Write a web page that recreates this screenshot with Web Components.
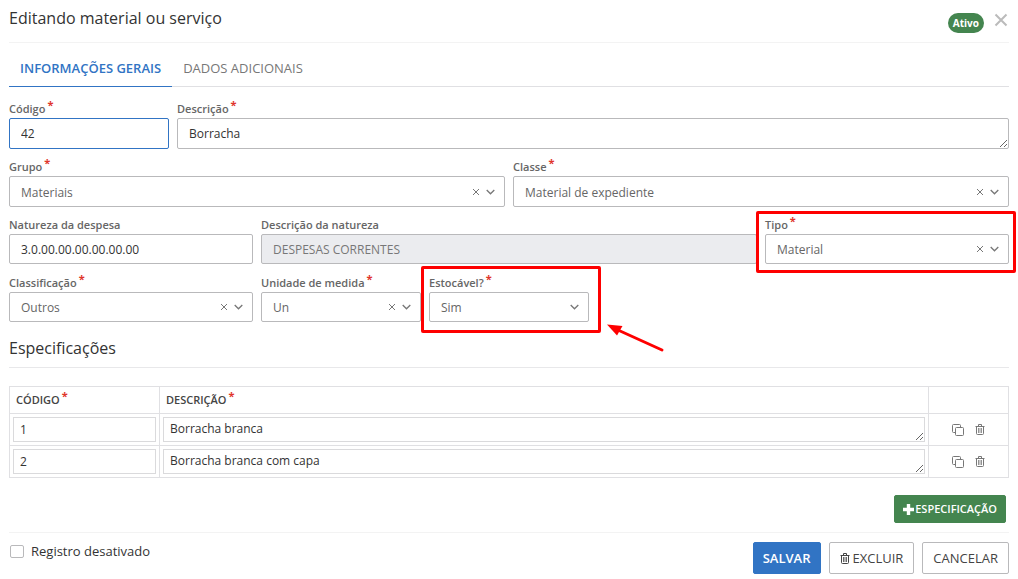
<!DOCTYPE html>
<html lang="pt-BR">
<head>
<meta charset="utf-8">
<meta name="viewport" content="width=device-width, initial-scale=1">
<title>Editando material ou serviço</title>
<style>
  body {
    margin: 0;
    background: #fff;
    color: #333;
    font-family: "Open Sans", "Noto Sans", sans-serif;
    font-size: 12px;
    --blue: #3174c4;
    --green: #44854f;
    --red: #e0352b;
    --line: #e0e0e3;
    --border: #b9b9bb;
  }
</style>
</head>
<body>
<material-dialog></material-dialog>

<script>
const ICONS = {
  close: '<svg width="14" height="14" viewBox="0 0 14 14"><path d="M1.5 1.5l11 11M12.5 1.5l-11 11" stroke="currentColor" stroke-width="2" fill="none"/></svg>',
  clear: '<svg width="8" height="8" viewBox="0 0 8 8"><path d="M1 1l6 6M7 1L1 7" stroke="currentColor" stroke-width="1" fill="none"/></svg>',
  chevron: '<svg width="9" height="6" viewBox="0 0 9 6"><path d="M.7 1L4.500 4.800 8.300 1" stroke="currentColor" stroke-width="1.300" fill="none"/></svg>',
  copy: '<svg width="12" height="12" viewBox="0 0 12 12"><g fill="none" stroke="currentColor"><path d="M3 8.500H1.500Q.5 8.500.5 7.500V1.500Q.5.500 1.500.500H7.500Q8.500.500 8.500 1.500V3"/><rect x="3.500" y="3.500" width="8" height="8" rx="1"/></g></svg>',
  trash: '<svg width="10" height="11" viewBox="0 0 10 11"><g fill="none" stroke="currentColor"><path d="M.5 2.500H9.500M3.500 2.500V.5H6.500V2.500M1.500 3V9.500Q1.500 10.500 2.500 10.500H7.500Q8.500 10.500 8.500 9.500V3"/><path d="M3.500 4V9M5 4V9M6.500 4V9" stroke-width=".8"/></g></svg>',
  plus: '<svg width="11" height="11" viewBox="0 0 11 11"><path d="M5.500 0V11M0 5.500H11" stroke="currentColor" stroke-width="3.400" fill="none"/></svg>'
};

function define(name, html, setup) {
  const template = document.createElement("template");
  template.innerHTML = html;
  customElements.define(name, class extends HTMLElement {
    constructor() {
      super();
      this.attachShadow({ mode: "open" });
    }
    connectedCallback() {
      if (this.shadowRoot.childNodes.length) return;
      this.shadowRoot.append(template.content.cloneNode(true));
      if (setup) setup(this, this.shadowRoot);
    }
  });
}

define("ui-icon", `
<style>
  :host { display: inline-flex; flex: none; }
  svg { display: block; }
</style>`, (host, root) => {
  root.append(document.createRange().createContextualFragment(ICONS[host.getAttribute("name")]));
});

define("status-badge", `
<style>
  :host { display: inline-block; padding: 0 5px; border-radius: 10px; background: var(--green);
    color: #fff; font-size: 10px; font-weight: 700; line-height: 20px; }
</style><slot></slot>`);

define("dialog-header", `
<style>
  :host { display: flex; justify-content: space-between; height: 42px; border-bottom: 1px solid #f3f3f3; }
  h1 { margin: 6px 0 0; font-size: 16px; font-weight: 400; line-height: 24px; }
  .side { display: flex; align-items: flex-start; gap: 9px; padding-top: 13px; }
  button { display: flex; margin: 0; padding: 0 1px; border: 0; background: none; color: #bbb; }
</style>
<h1><slot></slot></h1>
<div class="side"><slot name="status"></slot>
<button type="button" aria-label="Fechar"><ui-icon name="close"></ui-icon></button></div>`);

define("tab-bar", `
<style>
  :host { display: flex; padding-top: 7px; border-bottom: 1px solid var(--line); }
</style><slot></slot>`);

define("tab-item", `
<style>
  :host { display: block; margin-bottom: -1px; }
  button { display: block; height: 37px; padding: 0 11px; border: 0; border-bottom: 1px solid transparent;
    background: none; color: #777; font: 13px/36px "Open Sans", "Noto Sans", sans-serif; }
  :host([selected]) button { border-color: var(--blue); color: var(--blue); font-weight: 600; }
</style>
<button type="button"><slot></slot></button>`);

define("form-grid", `
<style>
  :host { display: grid; grid-template-columns: repeat(12, minmax(0, 1fr)); column-gap: 8px; padding-top: 13px; }
</style><slot></slot>`);

define("form-field", `
<style>
  :host { display: block; position: relative; height: 58px; }
  :host([span="2"]) { grid-column: span 2; }
  :host([span="3"]) { grid-column: span 3; }
  :host([span="6"]) { grid-column: span 6; }
  :host([span="10"]) { grid-column: span 10; }
  label { display: block; height: 18px; font-size: 11px; font-weight: 600; line-height: 18px; color: #666; white-space: nowrap; }
  sup { margin-left: 2px; color: var(--red); font-size: 11px; font-weight: 700; line-height: 0; vertical-align: 4px; }
  .box { position: relative; }
  input, select, textarea { display: block; box-sizing: border-box; width: 100%; height: 31px; margin: 0;
    padding: 0 11px; border: 1px solid var(--border); border-radius: 2px; outline: 0; background: #fff;
    color: #333; font: 12px/18px "Open Sans", "Noto Sans", sans-serif; appearance: none; }
  textarea { padding: 6px 11px; overflow: hidden; }
  select { padding-top: 2px; color: #666; }
  :host([short]) input, :host([short]) select { height: 30px; }
  :host([active]) input { border-color: var(--blue); }
  input:disabled { background: #ebecef; color: #777; }
  .tools { position: absolute; inset: 0 10px 0 auto; display: flex; align-items: center; gap: 6px; color: #777; pointer-events: none; }
  .tools button { display: flex; padding: 0; border: 0; background: none; color: inherit; pointer-events: auto; }
  :host([mark])::after { content: ""; position: absolute; inset: -5px -7px 1px -9px; border: 3px solid #fe0000; border-radius: 2px; pointer-events: none; }
  :host([mark="wide"])::after { inset: -8px -12px -1px -8px; }
</style>
<label for="control"></label>
<div class="box"></div>`, (host, root) => {
  const kind = host.getAttribute("kind") || "input";
  const value = host.getAttribute("value");
  const label = root.querySelector("label");
  label.textContent = host.getAttribute("label");
  if (host.hasAttribute("required")) {
    const star = document.createElement("sup");
    star.textContent = "*";
    label.append(star);
  }
  const control = document.createElement(kind);
  control.id = "control";
  if (kind === "select") control.add(new Option(value));
  else control.value = value;
  control.disabled = host.hasAttribute("disabled");
  const box = root.querySelector(".box");
  box.append(control);
  if (kind === "select") {
    const tools = document.createElement("div");
    tools.className = "tools";
    tools.innerHTML = (host.hasAttribute("clearable")
      ? '<button type="button" aria-label="Limpar"><ui-icon name="clear"></ui-icon></button>' : "")
      + '<ui-icon name="chevron"></ui-icon>';
    box.append(tools);
  }
});

define("callout-arrow", `
<style>
  :host { position: absolute; left: 178px; top: 49px; pointer-events: none; }
  svg { display: block; }
</style>
<svg width="58" height="30" viewBox="0 0 58 30"><path d="M12 7.500L55 27" stroke="#fe0000" stroke-width="3" stroke-linecap="round"/><path d="M0 1.500L15.500 3 10 12.500Z" fill="#fe0000"/></svg>`);

define("section-title", `
<style>
  :host { display: block; border-bottom: 1px solid #e8e8ea; }
  h2 { margin: 0; padding-bottom: 7px; font-size: 16px; font-weight: 400; line-height: 24px; }
</style><h2><slot></slot></h2>`);

define("spec-table", `
<style>
  :host { display: block; margin-top: 18px; }
  table { width: 100%; border-collapse: collapse; table-layout: fixed; }
  .code-col { width: 150px; }
  .tool-col { width: 80px; }
  th, td { box-sizing: border-box; border: 1px solid var(--line); padding: 3px; }
  th { height: 27px; padding: 0 6px; color: #444; font-size: 11px; font-weight: 600; line-height: 26px; text-align: left; }
  sup { margin-left: 2px; color: var(--red); font-size: 11px; font-weight: 700; line-height: 0; vertical-align: 4px; }
  input, textarea { display: block; box-sizing: border-box; width: 100%; height: 25px; margin: 0; padding: 0 6px;
    border: 1px solid #dadadc; border-radius: 0; outline: 0; background: #fff; color: #333;
    font: 12px/18px "Open Sans", "Noto Sans", sans-serif; }
  textarea { padding-top: 2px; overflow: hidden; }
  .actions { display: flex; justify-content: center; align-items: center; gap: 11px; color: #777; }
  .actions button { display: flex; padding: 0; border: 0; background: none; color: inherit; }
</style>
<table>
  <colgroup><col class="code-col"><col><col class="tool-col"></colgroup>
  <thead><tr><th>CÓDIGO<sup>*</sup></th><th>DESCRIÇÃO<sup>*</sup></th><th></th></tr></thead>
  <tbody></tbody>
</table>`, (host, root) => {
  const body = root.querySelector("tbody");
  [["1", "Borracha branca"], ["2", "Borracha branca com capa"]].forEach(([code, text]) => {
    const row = body.insertRow();
    row.innerHTML = `<td><input aria-label="Código" value="${code}"></td>
      <td><textarea aria-label="Descrição">${text}</textarea></td>
      <td><div class="actions"><button type="button" aria-label="Copiar"><ui-icon name="copy"></ui-icon></button>
      <button type="button" aria-label="Excluir"><ui-icon name="trash"></ui-icon></button></div></td>`;
  });
});

define("ui-button", `
<style>
  :host { display: block; }
  button { display: flex; align-items: center; gap: 3px; box-sizing: border-box; height: 32px; margin: 0; padding: 0 10px;
    border: 1px solid var(--border); border-radius: 2px; background: #fff; color: #444;
    font: 13px/18px "Open Sans", "Noto Sans", sans-serif; white-space: nowrap; }
  :host([variant="primary"]) button { padding: 0 9px; border-color: var(--blue); background: var(--blue); color: #fff; font-weight: 600; }
  :host([variant="add"]) button { height: 28px; padding: 0 8px; gap: 1px; border-color: var(--green); background: var(--green); color: #fff; font-size: 11px; font-weight: 600; }
</style>
<button type="button"><slot></slot></button>`);

define("check-box", `
<style>
  :host { display: block; }
  label { display: flex; align-items: center; gap: 7px; font-size: 13px; line-height: 18px; }
  input { appearance: none; box-sizing: border-box; width: 14px; height: 13px; margin: 0 0 0 1px; border: 1px solid var(--border); border-radius: 2px; background: #fff; }
</style>
<label><input type="checkbox"><slot></slot></label>`);

define("material-dialog", `
<style>
  :host { display: block; padding: 0 9px; }
  section-title { margin-top: 4px; }
  .add { display: flex; justify-content: flex-end; padding: 17px 3px 9px; }
  footer { display: flex; justify-content: space-between; align-items: flex-start; padding: 9px 0 4px; border-top: 1px solid #f3f3f3; }
  .buttons { display: flex; gap: 8px; }
</style>
<dialog-header>Editando material ou serviço<status-badge slot="status">Ativo</status-badge></dialog-header>
<tab-bar><tab-item selected>INFORMAÇÕES GERAIS</tab-item><tab-item>DADOS ADICIONAIS</tab-item></tab-bar>
<form-grid>
  <form-field span="2" label="Código" value="42" required active></form-field>
  <form-field span="10" label="Descrição" kind="textarea" value="Borracha" required></form-field>
  <form-field span="6" label="Grupo" kind="select" value="Materiais" required clearable></form-field>
  <form-field span="6" label="Classe" kind="select" value="Material de expediente" required clearable></form-field>
  <form-field span="3" short label="Natureza da despesa" value="3.0.00.00.00.00.00.00"></form-field>
  <form-field span="6" short label="Descrição da natureza" value="DESPESAS CORRENTES" disabled></form-field>
  <form-field span="3" short label="Tipo" kind="select" value="Material" required clearable mark></form-field>
  <form-field span="3" short label="Classificação" kind="select" value="Outros" required clearable></form-field>
  <form-field span="2" short label="Unidade de medida" kind="select" value="Un" required clearable></form-field>
  <form-field span="2" short label="Estocável?" kind="select" value="Sim" required mark="wide"></form-field>
</form-grid>
<section-title>Especificações</section-title>
<spec-table></spec-table>
<div class="add"><ui-button variant="add"><ui-icon name="plus"></ui-icon>ESPECIFICAÇÃO</ui-button></div>
<footer>
  <check-box>Registro desativado</check-box>
  <div class="buttons">
    <ui-button variant="primary">SALVAR</ui-button>
    <ui-button><ui-icon name="trash"></ui-icon>EXCLUIR</ui-button>
    <ui-button>CANCELAR</ui-button>
  </div>
</footer>`, (host, root) => {
  root.querySelector('[mark="wide"]').shadowRoot.append(document.createElement("callout-arrow"));
});
</script>
</body>
</html>
